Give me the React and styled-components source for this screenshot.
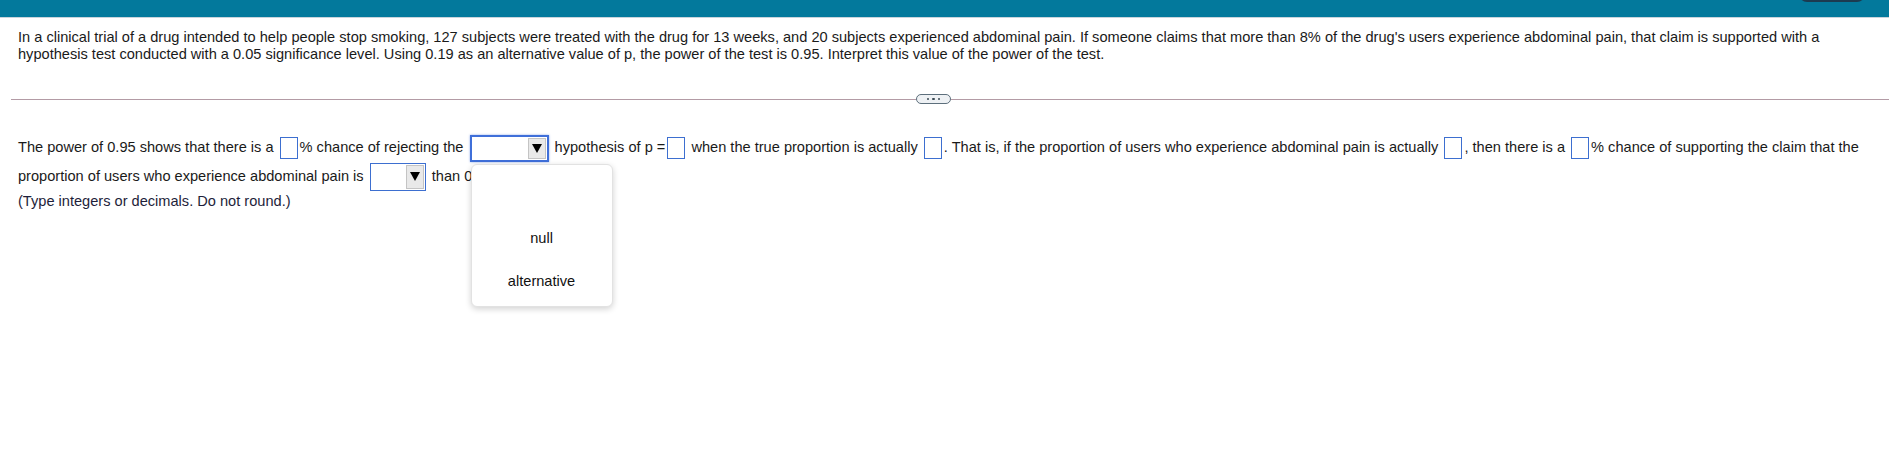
import styled, { createGlobalStyle } from "styled-components";

const GlobalStyle = createGlobalStyle`
  html, body {
    margin: 0;
    padding: 0;
    background: #ffffff;
  }
  body {
    font-family: "Liberation Sans", Arial, sans-serif;
    font-size: 14.6px;
    color: #1a1a1a;
  }
`;

const Page = styled.div`
  width: 1889px;
  height: 466px;
  overflow: hidden;
  background: #fff;
`;

const TopBar = styled.div`
  position: relative;
  height: 17px;
  background: #03799c;
  border-bottom: 1px solid #c9d4dc;
`;

const CornerButton = styled.div`
  position: absolute;
  right: 24px;
  top: -20px;
  width: 66px;
  height: 22px;
  border-radius: 8px;
  background: #1c3b50;
`;

const Question = styled.p`
  margin: 0;
  padding: 11px 40px 0 18px;
  line-height: 17px;
`;

const Divider = styled.div`
  display: grid;
  grid-template-columns: 905px auto 1fr;
  align-items: center;
  margin: 30px 0 0 11px;
  height: 12px;
`;

const Rule = styled.div`
  height: 1px;
  background: #b39ba5;
`;

const MorePill = styled.div`
  display: flex;
  align-items: center;
  justify-content: center;
  gap: 3px;
  width: 33px;
  height: 8px;
  border: 1.5px solid #5d6f7c;
  border-radius: 6px;
  background: #eef1f4;
`;

const Dot = styled.span`
  width: 2.5px;
  height: 2.5px;
  border-radius: 50%;
  background: #3b4a55;
`;

const Answer = styled.div`
  padding: 28px 20px 0 18px;
`;

const AnswerText = styled.p`
  margin: 0;
  line-height: 28px;
`;

const Blank = styled.span`
  display: inline-block;
  width: 16px;
  height: 20px;
  border: 1px solid #3d6fd0;
  vertical-align: middle;
  margin: 0 2px;
`;

const Select = styled.span`
  position: relative;
  display: inline-flex;
  justify-content: flex-end;
  align-items: stretch;
  box-sizing: border-box;
  width: ${(p) => p.$w}px;
  height: ${(p) => p.$h}px;
  padding: 1px;
  border: ${(p) => (p.$focused ? "2px solid #3f6fd9" : "1px solid #3d6fd0")};
  box-shadow: ${(p) => (p.$focused ? "0 0 2px rgba(63,111,217,0.6)" : "none")};
  vertical-align: middle;
  margin: 0 2px;
  background: #fff;
  line-height: normal;
`;

const Arrow = styled.span`
  display: flex;
  align-items: center;
  justify-content: center;
  width: 16px;
  background: #e9e9e9;
  border: 1px solid #c4c4c4;
`;

const Hint = styled.p`
  margin: 0;
  line-height: 20px;
  color: #1e1e3a;
`;

const Menu = styled.div`
  position: absolute;
  left: -1px;
  top: calc(100% + 4px);
  width: 142px;
  height: 143px;
  box-sizing: border-box;
  padding: 9px 0 0;
  background: #fff;
  border: 1px solid #e2e2e2;
  border-radius: 6px;
  box-shadow: 0 2px 6px rgba(0, 0, 0, 0.18);
  z-index: 2;
`;

const MenuItem = styled.div`
  height: 43px;
  display: flex;
  align-items: center;
  justify-content: center;
  color: #111;
`;

function Dropdown({ w, h, focused, children }) {
  return (
    <Select $w={w} $h={h} $focused={focused}>
      <Arrow>
        <svg width="10" height="9" viewBox="0 0 10 9">
          <polygon points="0,0 10,0 5,9" fill="#000" />
        </svg>
      </Arrow>
      {children}
    </Select>
  );
}

export default function App() {
  return (
    <Page>
      <GlobalStyle />
      <TopBar>
        <CornerButton />
      </TopBar>
      <Question>
        In a clinical trial of a drug intended to help people stop smoking, 127 subjects were treated with the drug for 13
        weeks, and 20 subjects experienced abdominal pain. If someone claims that more than 8% of the drug's users
        experience abdominal pain, that claim is supported with a hypothesis test conducted with a 0.05 significance
        level. Using 0.19 as an alternative value of p, the power of the test is 0.95. Interpret this value of the power
        of the test.
      </Question>
      <Divider>
        <Rule />
        <MorePill>
          <Dot />
          <Dot />
          <Dot />
        </MorePill>
        <Rule />
      </Divider>
      <Answer>
        <AnswerText>
          The power of 0.95 shows that there is a <Blank />% chance of rejecting the{" "}
          <Dropdown w={79} h={27} focused>
            <Menu>
              <MenuItem />
              <MenuItem>null</MenuItem>
              <MenuItem>alternative</MenuItem>
            </Menu>
          </Dropdown>{" "}
          hypothesis of p =<Blank /> when the true proportion is actually <Blank />. That is, if the proportion of users
          who experience abdominal pain is actually <Blank />, then there is a <Blank />% chance of supporting the claim
          that the proportion of users who experience abdominal pain is <Dropdown w={56} h={28} /> than 0.08.
        </AnswerText>
        <Hint>(Type integers or decimals. Do not round.)</Hint>
      </Answer>
    </Page>
  );
}
